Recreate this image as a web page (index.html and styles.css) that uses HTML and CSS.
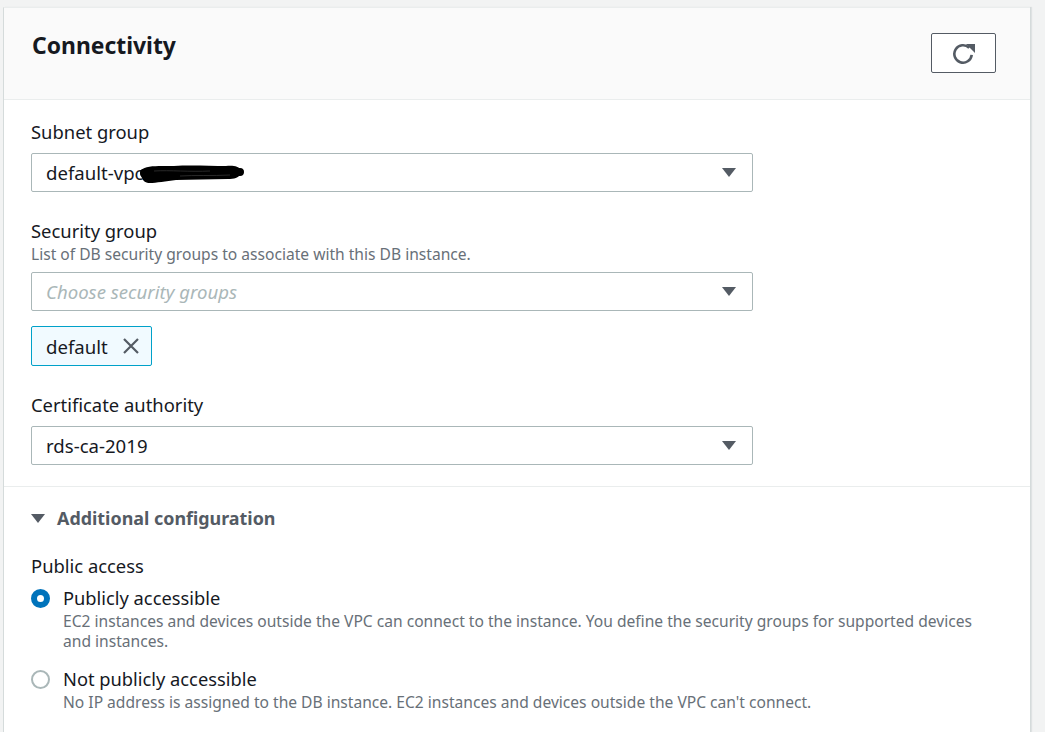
FILE: index.html
```html
<!DOCTYPE html>
<html lang="en">
<head>
<meta charset="utf-8">
<title>Connectivity</title>
<link rel="stylesheet" href="styles.css">
</head>
<body>
<div class="card">
  <div class="card-header">
    <h2 class="title">Connectivity</h2>
    <button class="btn-refresh" type="button" aria-label="Refresh">
      <svg width="23" height="22" viewBox="0 0 23 22">
        <path d="M17.2 5.8 A8.7 8.7 0 1 0 19.7 12.8" fill="none" stroke="#545b64" stroke-width="2.6"/>
        <polygon points="14,2 23,2 23,11" fill="#545b64"/>
      </svg>
    </button>
  </div>
  <div class="card-body">
    <div class="field">
      <div class="label">Subnet group</div>
      <div class="select">
        <span class="value">default-vpc</span><svg class="redact" width="104" height="22" viewBox="0 0 104 22"><path d="M1 7 C6 2 20 3 34 3 C50 2 70 3 86 3 C94 2 99 4 100 6 L104 8 L100 11 C99 15 94 16 88 16 C70 16 52 17 36 17 C26 18 16 20 10 20 C6 20 3 18 2 15 C0 12 0 9 1 7 Z" fill="#000"/><path d="M4 10 C30 9 60 10 100 9" stroke="#000" stroke-width="8" fill="none" stroke-linecap="round"/><path d="M14 8 C30 7 50 9 70 8" stroke="#333" stroke-width="0.8" fill="none"/><path d="M40 13 C55 12 72 13 90 12" stroke="#333" stroke-width="0.8" fill="none"/></svg>
        <span class="caret"></span>
      </div>
    </div>
    <div class="field">
      <div class="label">Security group</div>
      <div class="desc">List of DB security groups to associate with this DB instance.</div>
      <div class="select">
        <span class="placeholder">Choose security groups</span>
        <span class="caret"></span>
      </div>
      <div class="tag">
        <span>default</span>
        <svg width="16" height="16" viewBox="0 0 16 16"><path d="M1 1 L15 15 M15 1 L1 15" stroke="#545b64" stroke-width="2.2" fill="none"/></svg>
      </div>
    </div>
    <div class="field last">
      <div class="label">Certificate authority</div>
      <div class="select">
        <span class="value">rds-ca-2019</span>
        <span class="caret"></span>
      </div>
    </div>
  </div>
  <div class="card-section">
    <div class="expander"><span class="expander-caret"></span>Additional configuration</div>
    <div class="label">Public access</div>
    <div class="radio-group">
      <div class="radio">
        <span class="radio-circle checked"></span>
        <div class="radio-text">
          <div class="radio-label">Publicly accessible</div>
          <div class="radio-desc">EC2 instances and devices outside the VPC can connect to the instance. You define the security groups for supported devices and instances.</div>
        </div>
      </div>
      <div class="radio">
        <span class="radio-circle"></span>
        <div class="radio-text">
          <div class="radio-label">Not publicly accessible</div>
          <div class="radio-desc">No IP address is assigned to the DB instance. EC2 instances and devices outside the VPC can't connect.</div>
        </div>
      </div>
    </div>
  </div>
</div>
</body>
</html>
```
FILE: styles.css
```css
html, body {
  margin: 0;
  padding: 0;
  background: #f2f3f3;
  font-family: "Noto Sans", "Open Sans", sans-serif;
  color: #16191f;
}
body {
  padding: 7px 0 0 3px;
  height: 732px;
  box-sizing: border-box;
  overflow: hidden;
}
.card {
  width: 1026px;
  background: #fff;
  border-left: 1px solid #d5dbdb;
  border-top: 1px solid #eaeded;
  box-shadow: 1px 0 0 #d5dbdb, 2px 0 1px rgba(0,28,36,0.08);
  min-height: 740px;
}
.card-header {
  background: #fafafa;
  height: 91px;
  border-bottom: 1px solid #eaeded;
  display: flex;
  justify-content: space-between;
  align-items: flex-start;
  padding: 0 34px 0 28px;
}
.title {
  margin: 24px 0 0 0;
  font-size: 22.9px;
  line-height: 28px;
  font-weight: 700;
}
.btn-refresh {
  margin-top: 25px;
  width: 65px;
  height: 40px;
  border: 1px solid #545b64;
  border-radius: 2px;
  background: #fff;
  display: flex;
  align-items: center;
  justify-content: center;
  padding: 0;
}
.card-body {
  padding: 20px 27px 21px 27px;
  border-bottom: 1px solid #eaeded;
}
.field {
  margin-bottom: 27px;
}
.field.last { margin-bottom: 0; }
.label {
  font-size: 18.4px;
  line-height: 24px;
  margin-bottom: 9px;
}
.desc {
  font-size: 15.6px;
  line-height: 20px;
  color: #687078;
  margin-top: -8px;
  margin-bottom: 8px;
}
.select {
  width: 722px;
  height: 39px;
  box-sizing: border-box;
  border: 1px solid #aab7b8;
  border-radius: 2px;
  display: flex;
  align-items: center;
  padding: 0 16px 0 14px;
  font-size: 18.6px;
}
.value { color: #16191f; }
.redact { flex: none; margin-left: -4px; margin-top: 2px; }
.placeholder {
  color: #aab7b8;
  font-style: italic;
}
.caret {
  margin-left: auto;
  width: 0;
  height: 0;
  border-left: 7px solid transparent;
  border-right: 7px solid transparent;
  border-top: 9px solid #545b64;
}
.tag {
  margin-top: 15px;
  display: inline-flex;
  align-items: center;
  gap: 15px;
  height: 40px;
  box-sizing: border-box;
  padding: 0 12px 0 14px;
  background: #f1faff;
  border: 1px solid #00a1c9;
  border-radius: 2px;
  font-size: 18.6px;
}
.card-section {
  padding: 19px 27px 0 27px;
}
.expander {
  display: flex;
  align-items: center;
  font-size: 17.9px;
  line-height: 24px;
  font-weight: 700;
  color: #545b64;
  margin-bottom: 24px;
}
.expander-caret {
  width: 0;
  height: 0;
  border-left: 7px solid transparent;
  border-right: 7px solid transparent;
  border-top: 9px solid #545b64;
  margin-right: 12px;
}
.radio-group {
  display: flex;
  flex-direction: column;
  gap: 16px;
  margin-top: -1px;
}
.radio {
  display: flex;
  align-items: flex-start;
}
.radio-circle {
  flex: none;
  width: 19px;
  height: 19px;
  box-sizing: border-box;
  border-radius: 50%;
  border: 2px solid #aab7b8;
  background: #fff;
  margin-top: 3px;
  margin-right: 13px;
}
.radio-circle.checked {
  border: 6px solid #0073bb;
}
.radio-text {
  max-width: 925px;
}
.radio-label {
  font-size: 18.3px;
  line-height: 24px;
}
.radio-desc {
  font-size: 15.6px;
  line-height: 20px;
  color: #687078;
  margin-top: 1px;
}
```
